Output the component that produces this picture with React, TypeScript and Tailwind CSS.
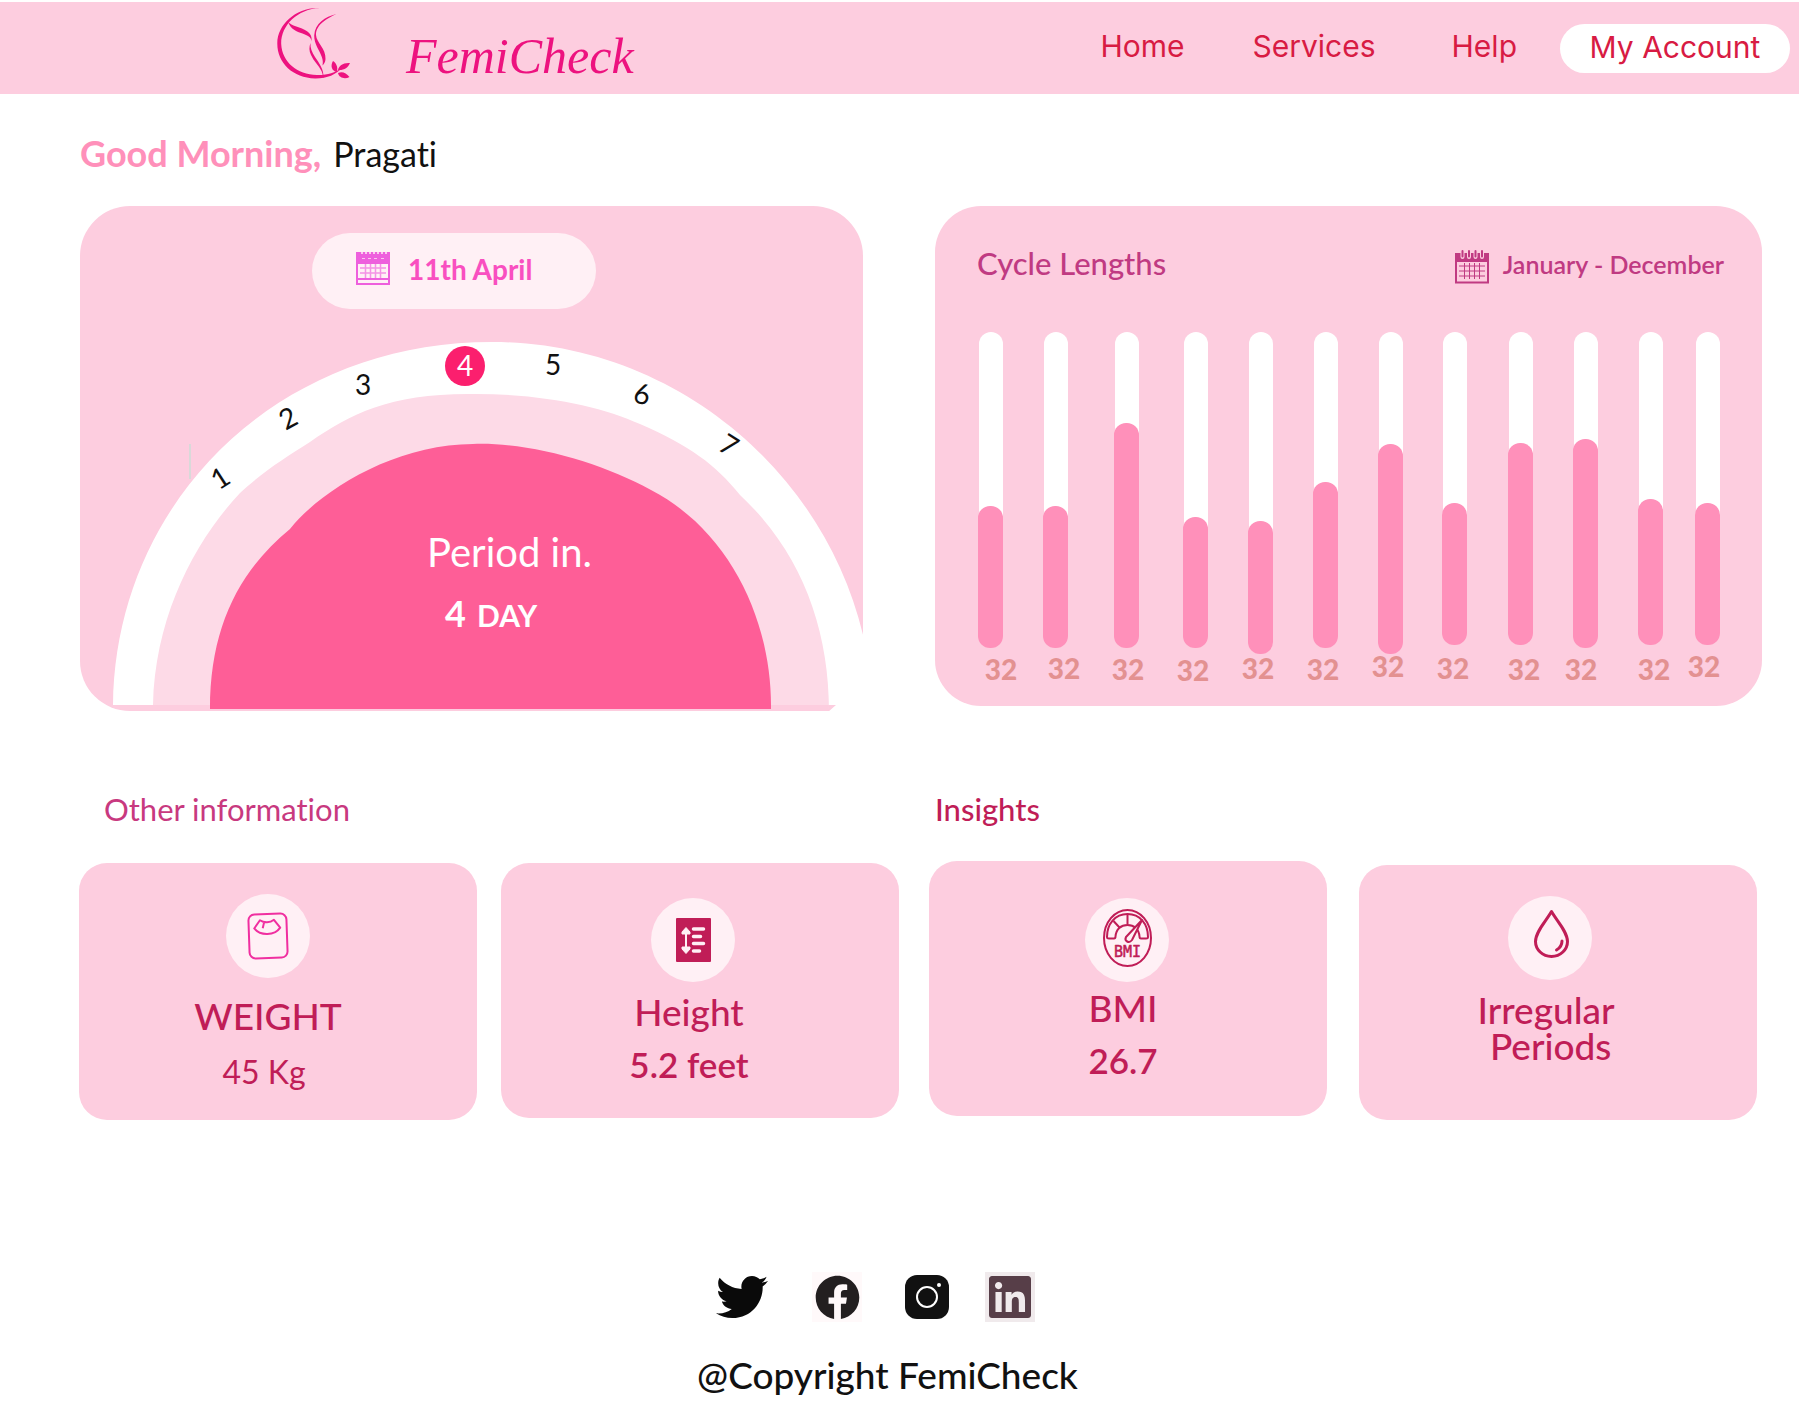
import React from "react";
import { FaFacebook, FaLinkedin, FaTwitter } from "react-icons/fa";

const bars = [
  { x: 44, top: 300, bottom: 442, labelX: 66, labelY: 474 },
  { x: 109, top: 300, bottom: 442, labelX: 129, labelY: 473 },
  { x: 180, top: 217, bottom: 442, labelX: 193, labelY: 474 },
  { x: 249, top: 311, bottom: 442, labelX: 258, labelY: 475 },
  { x: 314, top: 315, bottom: 448, labelX: 323, labelY: 473 },
  { x: 379, top: 276, bottom: 442, labelX: 388, labelY: 474 },
  { x: 444, top: 238, bottom: 448, labelX: 453, labelY: 471 },
  { x: 508, top: 297, bottom: 439, labelX: 518, labelY: 473 },
  { x: 574, top: 237, bottom: 439, labelX: 589, labelY: 474 },
  { x: 639, top: 233, bottom: 442, labelX: 646, labelY: 474 },
  { x: 704, top: 293, bottom: 439, labelX: 719, labelY: 474 },
  { x: 761, top: 297, bottom: 439, labelX: 769, labelY: 471 },
];

const dialDays = [
  { n: 1, x: 140, y: 272, r: -33 },
  { n: 2, x: 208, y: 212, r: -28 },
  { n: 3, x: 283, y: 179, r: 0 },
  { n: 5, x: 473, y: 159, r: 0 },
  { n: 6, x: 562, y: 188, r: 8 },
  { n: 7, x: 649, y: 239, r: 32 },
];

function Logo() {
  return (
    <svg viewBox="0 0 76 74" className="h-[74px] w-[76px] text-[#ed127f]" fill="currentColor" aria-hidden="true">
      <path d="M43 1C20 -.5 .5 17 .3 36c-.3 20 15.700 35 37.700 35.500 12 .2 21-4 27-10.500-7.500 5-15 7.300-25 7C20 67.500 5 55 4.200 37 3.700 19 20 2 43 1z" />
      <path d="M11 15c4 4 11 5 16 7.500 5 2.500 8.500 5.500 7.500 12 0-4.500-4-6-9-8-6-2-11.500-4-14.500-11.500z" />
      <path d="M59.500 7C51 11 39 17 39 28c.5 8 10 13 9.500 24 0 3-1.500 5-3 6.500 .5-2.500 .5-5-.5-8C42.500 43 37 37 37.200 28.500 38 16 48 10 59.500 7z" />
      <path d="M33.500 36c-.5 5 1.500 9 4.500 14 4 6 9 12 8.500 21-.7-.5-.5-4-2-7-3-6-8-10-10.500-16-2-4-2-8-.5-12z" />
      <path d="M56 54c3 2 5.500 6 3.700 11-4.700-1-6.700-6-3.700-11zM61 63c1-4.500 5-7.500 12-7-2 5-6 7.500-12 7zM61 66c4-2 8-.5 11.500 4-4.500 2.500-10.500 1-11.500-4z" />
    </svg>
  );
}

function DayCalendar({ className }: { className: string }) {
  return (
    <svg viewBox="0 0 34 34" className={className} fill="none" aria-hidden="true">
      <rect y="0" width="34" height="33" fill="currentColor" />
      <path d="M6 0v2M10 0v2M14 0v2M18 0v2M22 0v2M26 0v2M30 0v2" stroke="#fff0f5" strokeWidth="1.500" />
      <path d="M6 6.500h3M12 6.500h3M18 6.500h3M25 6.500h3" stroke="#fff0f5" opacity=".7" />
      <path d="M2 12h30v14H2zM2 28h30v3H2z" fill="#fff0f5" />
      <path d="M4 16h26M4 21h26M9.500 12v14M14.500 12v14M19.500 12v14M24.500 12v14" stroke="currentColor" opacity=".65" strokeWidth="1.500" />
    </svg>
  );
}

function YearCalendar({ className }: { className: string }) {
  return (
    <svg viewBox="0 0 34 34" className={className} fill="none" stroke="currentColor" aria-hidden="true">
      <rect x="0" y="3" width="34" height="9" fill="currentColor" stroke="none" />
      <path d="M7.500 2v5M14 2v5M20.500 2v5M27 2v5" strokeWidth="4" stroke="#fdcddf" strokeLinecap="round" />
      <path d="M7.500 1v5.500M14 1v5.500M20.500 1v5.500M27 1v5.500" strokeWidth="2" strokeLinecap="round" />
      <path d="M1 10v22.500h32V10" strokeWidth="2" />
      <path d="M4 16h26M4 21h26M4 26h26M9.500 13v16M14.500 13v16M19.500 13v16M24.500 13v16" strokeWidth="1" />
    </svg>
  );
}

function Scale() {
  return (
    <svg viewBox="0 0 84 84" className="size-full text-[#f02fa0]" fill="none" stroke="currentColor" strokeWidth="2" strokeLinejoin="round" aria-hidden="true">
      <g transform="rotate(-2 42 42)">
        <rect x="23" y="20" width="38" height="44" rx="6" />
        <path d="M34.500 26c4 3 10 3 14 0l6 8c-6 8-20 8-26 0zM38.500 28.500L37 34" />
      </g>
    </svg>
  );
}

function HeightIcon() {
  return (
    <svg viewBox="0 0 84 84" className="size-full" aria-hidden="true">
      <rect x="25" y="20" width="35" height="44" rx="1" fill="#c01d57" />
      <g stroke="#fff0f5" strokeLinecap="round" fill="none">
        <path d="M35 34v17" strokeWidth="2" />
        <path d="M42.500 31h10M42.500 38.500h7M42.500 45.500h10M42.500 53h6" strokeWidth="3.500" />
      </g>
      <path d="M35 29.500l4 4.500v2h-8v-2zM35 55.500l4-4.500v-2h-8v2z" fill="#fff0f5" stroke="#fff0f5" strokeLinejoin="round" />
    </svg>
  );
}

function BmiIcon() {
  return (
    <svg viewBox="0 0 84 84" className="size-full text-[#c01d57]" fill="none" stroke="currentColor" strokeWidth="2" strokeLinejoin="round" aria-hidden="true">
      <ellipse cx="42.500" cy="40" rx="23.500" ry="28" />
      <path d="M22 39c0-13 8-23 20.500-23S63 26 63 39c0 1-1 1.500-2 1.500h-5c-1 0-1.500-1-1.500-2C54 31 49 27 42.500 27S31 31 30.500 38.500c0 1-.5 2-1.500 2h-5c-1 0-2-.5-2-1.500z" />
      <path d="M42.500 16v10M28.500 23l6 6.500" />
      <path d="M57 22L47 42c-3 4-8 1-6-3z" fill="#fff0f5" />
      <text x="42.500" y="58.500" textAnchor="middle" fontSize="15" fontWeight="400" fill="currentColor" stroke="currentColor" strokeWidth="0.500" className="font-['DejaVu_Sans_Mono',monospace]">BMI</text>
    </svg>
  );
}

function Drop() {
  return (
    <svg viewBox="0 0 84 84" className="size-full text-[#c01d57]" fill="none" stroke="currentColor" strokeLinecap="round" strokeLinejoin="round" aria-hidden="true">
      <path d="M43.500 15.500c-5 9-16 20-16 30 0 8 7 15 16 15s16-7 16-15c0-10-11-21-16-30z" strokeWidth="3" />
      <path d="M54 45c0 4-2 7-5.500 9" strokeWidth="3" />
    </svg>
  );
}

function Instagram() {
  return (
    <svg viewBox="0 0 44 44" className="size-11" aria-hidden="true">
      <rect width="44" height="44" rx="12" fill="#111" />
      <circle cx="22" cy="22" r="10" fill="none" stroke="#fff" strokeWidth="2" />
      <circle cx="34" cy="10" r="2" fill="#fff" />
    </svg>
  );
}

function Dial() {
  return (
    <svg viewBox="0 0 783 505" className="block w-full" role="img" aria-label="Period in 4 days">
      <path d="M33 499C35 298 195 136 412 136C590 136 745 262 784 433V506H748L756 499Z" fill="#fff" />
      <path d="M73 499C75 410 115 335 160 287C185 264 205 252 230 236C270 208 310 188 388 188C460 187 520 200 560 218C610 240 635 258 660 289C720 345 749 420 749 505V499Z" fill="#fddae7" />
      <path d="M130 503C130 420 160 364 210 323C240 285 315 238 393 238C450 236 520 256 571 284C650 325 692 415 691 503Z" fill="#fe5e97" />
      <path d="M110 238V273" stroke="#d9d9d9" strokeWidth="2" />
      <circle cx="385" cy="160" r="20" fill="#fb1f6e" />
      <g textAnchor="middle" fontSize="28" fill="#111">
        {dialDays.map((d) => (
          <text key={d.n} x={d.x} y={d.y + 10} transform={`rotate(${d.r} ${d.x} ${d.y})`}>{d.n}</text>
        ))}
        <text x="385" y="170" fill="#fff">4</text>
      </g>
      <text x="347" y="361" fontSize="40" fill="#fff">Period in.</text>
      <text x="365" y="421" fontSize="36" fontWeight="700" fill="#fff">4</text>
      <text x="397" y="421" fontSize="30" fontWeight="700" fill="#fff">DAY</text>
    </svg>
  );
}

function CycleChart() {
  return (
    <svg viewBox="0 110 827 390" className="block w-full" role="img" aria-label="Cycle lengths by month">
      {bars.map((b) => (
        <g key={b.x}>
          <rect x={b.x} y="126" width="24" height={b.bottom - 136} rx="12" fill="#fff" />
          <rect x={b.x - 1} y={b.top} width="25" height={b.bottom - b.top} rx="12" fill="#ff90ba" />
          <text x={b.labelX} y={b.labelY} textAnchor="middle" fontSize="28" fontWeight="900" fill="#e39191">32</text>
        </g>
      ))}
    </svg>
  );
}

function InfoCard({ icon, className, children }: { icon: React.ReactNode; className: string; children: React.ReactNode }) {
  return (
    <article className={`flex flex-col items-center rounded-[28px] bg-[#fdcddf] text-center text-[#c01d57] ${className}`}>
      <div className="size-[84px] rounded-full bg-[#fff0f5]">{icon}</div>
      {children}
    </article>
  );
}

export default function App() {
  return (
    <div className="bg-white font-['Lato',sans-serif] text-[#111] [font-variant-ligatures:none]">
      <header className="mt-[2px] flex h-[92px] items-center justify-between bg-[#fdcddf] pr-[9px] pl-[277px]">
        <a href="#home" className="flex items-start gap-[53px] pb-2 text-[#ed127f]">
          <Logo />
          <span className="mt-6 font-['Liberation_Serif',serif] text-[50px] leading-none italic">FemiCheck</span>
        </a>
        <nav className="flex items-center font-['Inter',sans-serif] text-[30px] leading-10 text-[#d81b43]">
          <a href="#home" className="mr-[68px] pb-1">Home</a>
          <a href="#services" className="mr-[76px] pb-1">Services</a>
          <a href="#help" className="mr-[43px] pb-1">Help</a>
          <button type="button" className="h-[49px] w-[230px] rounded-full bg-white pb-[2px]">My Account</button>
        </nav>
      </header>

      <main>
        <h1 className="flex h-[112px] items-baseline gap-3 pt-[37px] pl-20 text-[34px] leading-[44px]">
          <span className="text-[36px] font-bold text-[#ff90ba]">Good Morning,</span>
          <span>Pragati</span>
        </h1>

        <div className="grid grid-cols-[783fr_827fr] items-start gap-[72px] pr-[37px] pl-20">
          <section className="relative overflow-hidden rounded-[50px] rounded-br-none bg-[#fdcddf]">
            <Dial />
            <div className="absolute inset-x-0 top-[27px] flex justify-center pr-[35px]">
              <div className="flex h-[76px] w-[284px] items-center gap-[18px] rounded-full bg-[#fff0f5] pb-1 pl-11">
                <DayCalendar className="size-[34px] text-[#ee5fdd]" />
                <time className="text-[28px] font-bold text-[#f94fc0]">11th April</time>
              </div>
            </div>
          </section>

          <section className="rounded-[46px] bg-[#fdcddf]">
            <div className="flex h-[110px] items-center justify-between pt-1 pr-[38px] pl-[42px] text-[#c03a82]">
              <h2 className="text-[31px] font-medium">Cycle Lengths</h2>
              <div className="flex items-center gap-[14px] pt-2">
                <YearCalendar className="size-[34px]" />
                <span className="pb-1 text-[25px] font-semibold">January - December</span>
              </div>
            </div>
            <CycleChart />
          </section>
        </div>

        <div className="mt-[76px] grid grid-cols-[820fr_828fr] gap-[30px] pr-[42px] pl-[79px]">
          <section>
            <h2 className="h-[76px] pl-[25px] text-[31px] leading-[44px] text-[#c8397f]">Other information</h2>
            <div className="grid grid-cols-2 items-start gap-6">
              <InfoCard icon={<Scale />} className="h-[257px] pt-[31px] pr-5">
                <h3 className="mt-4 text-[37px] leading-[44px] font-medium">WEIGHT</h3>
                <p className="mt-3 pr-2 text-[32px] leading-[44px]">45 Kg</p>
              </InfoCard>
              <InfoCard icon={<HeightIcon />} className="h-[255px] pt-[35px] pr-[14px]">
                <h3 className="mt-2 pr-2 text-[37px] leading-[44px] font-medium">Height</h3>
                <p className="mt-2 pr-2 text-[35px] leading-[44px] font-semibold">5.2 feet</p>
              </InfoCard>
            </div>
          </section>
          <section>
            <h2 className="h-[76px] pl-[6px] text-[31px] leading-[44px] font-medium text-[#c01d57]">Insights</h2>
            <div className="grid grid-cols-2 items-start gap-8">
              <InfoCard icon={<BmiIcon />} className="-mt-[2px] h-[255px] pt-[37px] pr-[2px]">
                <h3 className="mt-1 pr-2 text-[37px] leading-[44px] font-medium">BMI</h3>
                <p className="mt-2 pr-2 text-[35px] leading-[44px] font-semibold">26.7</p>
              </InfoCard>
              <InfoCard icon={<Drop />} className="mt-[2px] h-[255px] pt-[31px] pr-4">
                <h3 className="mt-3 pr-2 text-[37px] leading-9 font-medium">Irregular<br />&nbsp;Periods</h3>
              </InfoCard>
            </div>
          </section>
        </div>
      </main>

      <footer className="flex flex-col items-center pt-[151px] pr-6 pb-5">
        <div className="flex items-center pr-6">
          <a href="#twitter" aria-label="Twitter" className="mr-11"><FaTwitter className="size-[52px] text-[#0a0a0a]" /></a>
          <a href="#facebook" aria-label="Facebook" className="mr-[43px] flex size-[50px] items-center justify-center bg-[#fff9fa]"><FaFacebook className="size-[45px] text-[#231f20]" /></a>
          <a href="#instagram" aria-label="Instagram" className="mr-9"><Instagram /></a>
          <a href="#linkedin" aria-label="LinkedIn" className="flex size-[50px] items-center justify-center bg-[#f0eaec]"><FaLinkedin className="size-12 text-[#573e48]" /></a>
        </div>
        <p className="mt-[30px] text-[37px] leading-[44px] font-medium">@Copyright FemiCheck</p>
      </footer>
    </div>
  );
}
